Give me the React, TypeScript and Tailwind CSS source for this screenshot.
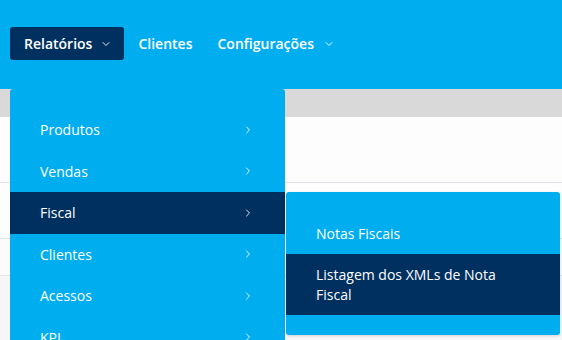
import { ChevronDown, ChevronRight } from 'lucide-react';

const items = ['Produtos', 'Vendas', 'Fiscal', 'Clientes', 'Acessos', 'KPI'];

function FiscalMenu() {
  return (
    <div className="absolute left-full top-0 ml-px w-[274px] rounded-[3px] bg-[#00adef] py-5 shadow-[0_1px_3px_rgba(0,0,0,0.15)]">
      <div className="px-[30px] py-[10.5px] text-[14px] font-medium leading-[21px] text-white">
        Notas Fiscais
      </div>
      <div className="bg-[#00305f] px-[30px] py-[10.5px] text-[14px] font-medium leading-[20px] text-white">
        <span className="block w-[200px]">Listagem dos XMLs de Nota Fiscal</span>
      </div>
    </div>
  );
}

export default function App() {
  return (
    <div
      className="relative h-[340px] w-[562px] overflow-hidden bg-[#f6f6f8]"
      style={{ fontFamily: '"Open Sans", "Noto Sans", sans-serif' }}
    >
      <header className="flex h-[89px] items-center gap-[14px] bg-[#00adef] pb-[2px] pl-[10px] text-[14px] font-semibold text-white">
        <button className="flex h-[33px] items-center gap-[8px] rounded-[3px] bg-[#00305f] pl-[14px] pr-[12px]">
          Relatórios
          <ChevronDown size={12} strokeWidth={1.75} />
        </button>
        <span className="pr-[11px]">Clientes</span>
        <span className="flex items-center gap-[9px]">
          Configurações
          <ChevronDown size={12} strokeWidth={1.75} />
        </span>
      </header>

      <div className="h-[28px] bg-[#d9d9da]" />
      <div className="h-[66px] border-b border-[#e2e2e8] bg-[#fdfdfe]" />
      <div className="h-[56px] border-b border-[#e2e2e8] bg-[#fdfdfe]" />
      <div className="h-[37px] border-b border-[#e2e2e8] bg-[#fbfbfc]" />

      <nav className="absolute left-[10px] top-[89px] w-[275px] rounded-t-[3px] bg-[#00adef] pt-5 pb-5">
        {items.map((item) => (
          <div
            key={item}
            className={`relative flex h-[41.5px] items-center justify-between pl-[30px] pr-[31px] text-[14px] font-medium text-white ${
              item === 'Fiscal' ? 'bg-[#00305f]' : ''
            }`}
          >
            <span>{item}</span>
            <ChevronRight size={12} strokeWidth={1.75} />
            {item === 'Fiscal' && <FiscalMenu />}
          </div>
        ))}
      </nav>
    </div>
  );
}
